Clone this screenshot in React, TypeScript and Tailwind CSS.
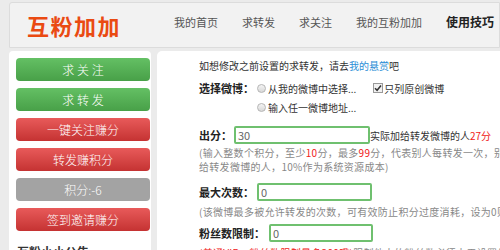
const font = "font-['Noto_Sans_CJK_SC','Noto_Sans',sans-serif]"

const navItems = ['我的首页', '求转发', '求关注', '我的互粉加加']

function SideButton({ label, tone }: { label: string; tone: 'green' | 'red' | 'gray' }) {
  const toneClass =
    tone === 'green'
      ? 'bg-gradient-to-b from-[#64c064] to-[#48a048]'
      : tone === 'red'
        ? 'bg-gradient-to-b from-[#e85a5a] to-[#c53232]'
        : 'bg-[#a3a3a3]'
  return (
    <div
      className={`h-[23px] shrink-0 rounded-[4px] ${toneClass} flex items-center justify-center text-white text-[12px] font-light leading-none`}
    >
      {label}
    </div>
  )
}

function Radio() {
  return <span className="inline-block w-[9px] h-[9px] rounded-full border border-[#b5b5b5] bg-gradient-to-b from-[#f4f4f4] to-[#d8d8d8] mr-[2px]" />
}

function Checkbox() {
  return (
    <span className="inline-flex w-[10px] h-[10px] border border-[#999] bg-[#f1f1f1] items-center justify-center mr-[1px]">
      <svg width="8" height="8" viewBox="0 0 8 8">
        <path d="M1 4.2 L3.1 6.3 L7 1.5" stroke="#333" strokeWidth="1.5" fill="none" />
      </svg>
    </span>
  )
}

function Field({ value, width }: { value: string; width: string }) {
  return (
    <div
      className={`${width} h-[18px] border-2 border-[#6fc06f] rounded-[2px] bg-white flex items-center px-[2px] text-[11px] text-[#666]`}
    >
      {value}
    </div>
  )
}

export default function App() {
  return (
    <div className={`w-[500px] h-[250px] overflow-hidden bg-[#ebebeb] pt-[2px] pl-[9px] ${font}`}>
      <div className="h-[46px] bg-[#f2f2f2] border border-[#dcdcdc] rounded-tl-[3px] flex items-center whitespace-nowrap">
        <div className="ml-[17px] text-[#ea4a12] text-[22px] font-bold tracking-[1.5px] leading-none">互粉加加</div>
        <div className="ml-[53px] flex items-center gap-[24px] text-[11px] text-[#555] -mt-[6px]">
          {navItems.map((n) => (
            <span key={n}>{n}</span>
          ))}
          <span className="text-[12px] font-bold text-[#222]">使用技巧</span>
        </div>
      </div>

      <div className="flex gap-[6px] mt-[3px]">
        <div className="w-[142px] shrink-0 bg-white rounded-tl-[4px] rounded-tr-[4px] pl-[7px] pr-[1px] pt-[7px] flex flex-col gap-[7px]">
          <SideButton label="求 关 注" tone="green" />
          <SideButton label="求 转 发" tone="green" />
          <SideButton label="一键关注赚分" tone="red" />
          <SideButton label="转发赚积分" tone="red" />
          <SideButton label="积分:-6" tone="gray" />
          <SideButton label="签到邀请赚分" tone="red" />
          <div className="mt-[8px] ml-[1px] text-[12px] font-bold text-[#333] leading-none">互粉小小公告</div>
        </div>

        <div className="flex-1 bg-white rounded-tl-[5px] pl-[42px] pt-[7px] pb-[10px] whitespace-nowrap overflow-hidden text-[#333]">
          <div className="h-[14px] flex items-center text-[10px]">
            如想修改之前设置的求转发，请去<span className="text-[#2c8ed6]">我的悬赏</span>吧
          </div>

          <div className="mt-[8px] h-[16px] flex items-center">
            <span className="text-[11px] font-bold text-[#222] w-[58px]">选择微博：</span>
            <Radio />
            <span className="text-[10px]">从我的微博中选择...</span>
            <span className="ml-[17px] flex items-center">
              <Checkbox />
              <span className="text-[10px]">只列原创微博</span>
            </span>
          </div>
          <div className="mt-[3px] h-[16px] flex items-center pl-[58px]">
            <Radio />
            <span className="text-[10px]">输入任一微博地址...</span>
          </div>

          <div className="mt-[11px] h-[18px] flex items-center">
            <span className="text-[11px] font-bold text-[#222] w-[35px]">出分：</span>
            <Field value="30" width="w-[136px]" />
            <span className="text-[10px] text-[#333]">
              实际加给转发微博的人<span className="text-[#f02020]">27分</span>
            </span>
          </div>
          <div className="mt-[2px] text-[10px] leading-[14px] tracking-[0.3px] text-[#888]">
            <div>
              (输入整数个积分，至少<span className="text-[#f02020]">10</span>分，最多
              <span className="text-[#f02020]">99</span>分，代表别人每转发一次，别人每转发一次
            </div>
            <div>给转发微博的人，10%作为系统资源成本)</div>
          </div>

          <div className="mt-[9px] h-[18px] flex items-center">
            <span className="text-[11px] font-bold text-[#222] w-[58px]">最大次数：</span>
            <Field value="0" width="w-[115px]" />
          </div>
          <div className="mt-[3px] h-[14px] flex items-center text-[10px] tracking-[0.3px] text-[#888]">
            (该微博最多被允许转发的次数，可有效防止积分过度消耗，设为0则不限制)
          </div>

          <div className="mt-[6px] h-[18px] flex items-center">
            <span className="text-[11px] font-bold text-[#222] w-[70px]">粉丝数限制：</span>
            <Field value="0" width="w-[104px]" />
          </div>
          <div className="mt-[3px] h-[14px] flex items-center text-[10px] tracking-[0.3px] text-[#888]">
            <span className="text-[#f02020]">(普通VIP，粉丝数限制最多200哦)</span>限制他人的粉丝数必须大于设置值才可以
          </div>
        </div>
      </div>
    </div>
  )
}
